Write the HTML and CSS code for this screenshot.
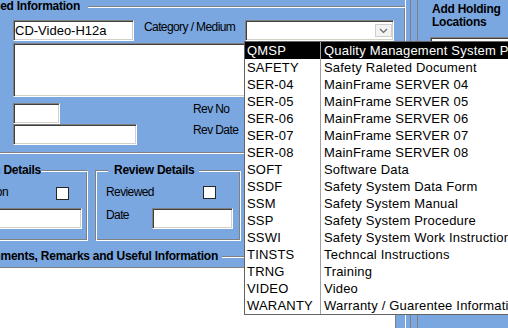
FILE: index.html
```html
<!DOCTYPE html>
<html>
<head>
<meta charset="utf-8">
<title>Document Details</title>
<link rel="stylesheet" href="styles.css">
</head>
<body>
<div class="app">
  <div class="main">
    <div class="form">
      <div class="grp grp-top">
        <div class="grp-head end"><span class="grp-title t-top">Detailed Information</span></div>
        <div class="grp-body">
          <div class="row r1">
            <input class="tb tb-code" value="CD-Video-H12a">
            <span class="lbl lbl-cat">Category / Medium</span>
            <div class="combo">
              <span class="combo-btn"><svg width="9" height="6" viewBox="0 0 9 6"><path d="M1 1 L4.5 4.5 L8 1" fill="none" stroke="#6a6a6a" stroke-width="1.2"/></svg></span>
            </div>
          </div>
          <textarea class="tb tb-desc"></textarea>
          <div class="row r3">
            <div class="cell"><input class="tb tb-revno"></div>
            <span class="lbl lbl-rev">Rev No</span>
          </div>
          <div class="row r4">
            <div class="cell"><input class="tb tb-revdate"></div>
            <span class="lbl lbl-rev">Rev Date</span>
          </div>
        </div>
      </div>
      <div class="pair">
        <div class="grp grp-ver">
          <div class="grp-head end"><span class="grp-title t-ver">Verification Details</span></div>
          <div class="chk-row ver-row">
            <span class="lbl">Verification</span>
            <span class="chk ver-chk"></span>
          </div>
          <input class="tb ver-date">
        </div>
        <div class="grp grp-rev">
          <div class="grp-head"><span class="grp-title t-rev">Review Details</span></div>
          <div class="chk-row rev-row">
            <span class="lbl rev-lbl">Reviewed</span>
            <span class="chk rev-chk"></span>
          </div>
          <div class="row date-row">
            <span class="lbl date-lbl">Date</span>
            <input class="tb rev-date">
          </div>
        </div>
      </div>
      <div class="grp grp-com">
        <div class="grp-head end"><span class="grp-title t-com">Comments, Remarks and Useful Information</span></div>
      </div>
    </div>
    <div class="blank"></div>
  </div>
  <div class="splitter"></div>
  <aside class="side">
    <h2 class="side-title">Add Holding<br>Locations</h2>
    <div class="loc-box"></div>
  </aside>
  <ul class="droplist">
    <li class="sel"><span class="code">QMSP</span><span class="desc">Quality Management System Procedure</span></li>
    <li><span class="code">SAFETY</span><span class="desc">Safety Raleted Document</span></li>
    <li><span class="code">SER-04</span><span class="desc">MainFrame SERVER 04</span></li>
    <li><span class="code">SER-05</span><span class="desc">MainFrame SERVER 05</span></li>
    <li><span class="code">SER-06</span><span class="desc">MainFrame SERVER 06</span></li>
    <li><span class="code">SER-07</span><span class="desc">MainFrame SERVER 07</span></li>
    <li><span class="code">SER-08</span><span class="desc">MainFrame SERVER 08</span></li>
    <li><span class="code">SOFT</span><span class="desc">Software Data</span></li>
    <li><span class="code">SSDF</span><span class="desc">Safety System Data Form</span></li>
    <li><span class="code">SSM</span><span class="desc">Safety System Manual</span></li>
    <li><span class="code">SSP</span><span class="desc">Safety System Procedure</span></li>
    <li><span class="code">SSWI</span><span class="desc">Safety System Work Instruction</span></li>
    <li><span class="code">TINSTS</span><span class="desc">Techncal Instructions</span></li>
    <li><span class="code">TRNG</span><span class="desc">Training</span></li>
    <li><span class="code">VIDEO</span><span class="desc">Video</span></li>
    <li><span class="code">WARANTY</span><span class="desc">Warranty / Guarentee Information</span></li>
  </ul>
</div>
</body>
</html>
```
FILE: styles.css
```css
* { box-sizing: border-box; }
html, body { margin: 0; padding: 0; }
body {
  width: 508px;
  height: 328px;
  overflow: hidden;
  background: #fff;
  color: #000;
  font-family: "Liberation Sans", Arial, sans-serif;
}
.app {
  position: relative;
  display: flex;
  width: 508px;
  height: 328px;
  overflow: hidden;
  background: #7aa7e0;
}
.main {
  flex: none;
  width: 410px;
  display: flex;
  flex-direction: column;
  overflow: hidden;
  background: linear-gradient(to right, transparent 405px, #fff 405px, #fff 406px, transparent 406px);
}
.form {
  flex: none;
  width: 510px;
  height: 268px;
  margin-left: -100px;
  padding-top: 6px;
  border-bottom: 1px solid #808080;
  overflow: hidden;
}
.blank {
  flex: 1;
  width: 396px;
  background: #fff;
  border-right: 1px solid #808080;
}

/* etched group boxes */
.grp {
  position: relative;
  border: 1px solid #808080;
}
.grp::after {
  content: "";
  position: absolute;
  left: 0;
  top: 0;
  right: -2px;
  bottom: -2px;
  border: 1px solid #fff;
  pointer-events: none;
}
.grp-head {
  position: relative;
  z-index: 1;
  display: flex;
  height: 14px;
  margin-top: -8px;
}
.grp-head.end { justify-content: flex-end; }
.grp-title {
  flex: none;
  padding: 0 6px;
  background: #7aa7e0;
  font-size: 12px;
  font-weight: bold;
  line-height: 14px;
  letter-spacing: -0.25px;
  white-space: nowrap;
}
.grp-top {
  margin-left: 48px;
  width: 457px;
  height: 147px;
}
.grp-body { padding-left: 64px; }
.t-top { margin-right: 316px; padding-right: 8px; }

.row { display: flex; align-items: flex-start; }
.lbl {
  font-size: 12px;
  line-height: 14px;
  letter-spacing: -0.6px;
  white-space: nowrap;
}
.r1 { margin-top: 7px; height: 21px; }
.lbl-cat { margin-left: 10px; width: 101px; flex: none; }
.r3 { margin-top: 6px; height: 21px; }
.r4 { height: 21px; }
.cell { flex: none; width: 180px; }
.lbl-rev { margin-top: -1px; }

.tb {
  display: block;
  margin: 0;
  padding: 0 0 0 1px;
  height: 21px;
  font-family: "Liberation Sans", Arial, sans-serif;
  font-size: 13px;
  letter-spacing: 0;
  color: #000;
  background: #fff;
  border: 1px solid;
  border-color: #808080 #fff #fff #808080;
  box-shadow: inset 1px 1px 0 #404040, inset -1px -1px 0 #d4d0c8;
  outline: none;
}
.tb-code { width: 121px; flex: none; }
.tb-desc { margin-top: 2px; width: 379px; height: 54px; resize: none; }
.tb-revno { width: 47px; }
.tb-revdate { width: 124px; }

.combo {
  flex: none;
  width: 149px;
  height: 21px;
  display: flex;
  align-items: center;
  justify-content: flex-end;
  background: #fff;
  border: 1px solid;
  border-color: #808080 #fff #fff #808080;
  box-shadow: inset 1px 1px 0 #404040, inset -1px -1px 0 #d4d0c8;
  padding-right: 1px;
}
.combo-btn {
  width: 17px;
  height: 13px;
  display: flex;
  align-items: center;
  justify-content: center;
  background: #f3f3f3;
  border: 1px solid #cfcfcf;
}

/* lower group boxes */
.pair { display: flex; margin-top: 17px; }
.grp-ver { flex: none; margin-left: 40px; width: 147px; height: 70px; }
.t-ver { margin-right: 45px; padding-right: 0; }
.grp-rev { flex: none; margin-left: 8px; width: 145px; height: 70px; padding-left: 10px; }
.t-rev { margin-left: 2px; padding: 0 4px 0 6px; }

.chk-row { display: flex; align-items: flex-start; margin-top: 8px; height: 14px; }
.ver-row { justify-content: flex-end; padding-right: 17px; }
.ver-row .chk { margin-left: 48px; margin-top: 2px; }
.chk {
  flex: none;
  width: 13px;
  height: 13px;
  background: #fff;
  border: 1px solid #262626;
}
.ver-date { margin: 9px 4px 0 auto; width: 120px; }
.rev-lbl { width: 97px; flex: none; }
.rev-chk { margin-top: 1px; }
.date-row { margin-top: 9px; }
.date-lbl { width: 46px; flex: none; }
.rev-date { width: 81px; flex: none; }

.grp-com { margin-top: 16px; margin-left: 48px; width: 457px; height: 60px; }
.t-com { margin-right: 182px; padding-right: 4px; }

/* splitter and side panel */
.splitter {
  flex: none;
  width: 8px;
  border-left: 1px solid #808080;
  border-right: 1px solid #808080;
}
.side {
  flex: none;
  width: 90px;
  padding: 3px 0 0 14px;
}
.side-title {
  margin: 0;
  font-size: 12px;
  font-weight: bold;
  line-height: 13px;
  letter-spacing: -0.25px;
  white-space: nowrap;
}
.loc-box {
  margin: 8px 0 0 -2px;
  width: 100px;
  height: 150px;
  background: #fff;
  border: 1px solid;
  border-color: #808080 #fff #fff #808080;
  box-shadow: inset 1px 1px 0 #404040;
}

/* open dropdown list */
.droplist {
  position: absolute;
  left: 244px;
  top: 41px;
  z-index: 5;
  width: 280px;
  margin: 0;
  padding: 0;
  list-style: none;
  background: #fff;
  border: 1px solid #646464;
  font-size: 13px;
  letter-spacing: 0.2px;
}
.droplist li {
  display: grid;
  grid-template-columns: 76px 1fr;
  height: 17px;
  line-height: 17px;
  white-space: nowrap;
}
.droplist .code { padding-left: 2px; border-right: 1px solid #a0a0a0; }
.droplist .desc { padding-left: 3px; overflow: hidden; }
.droplist .sel { background: #000; color: #fff; }
```
